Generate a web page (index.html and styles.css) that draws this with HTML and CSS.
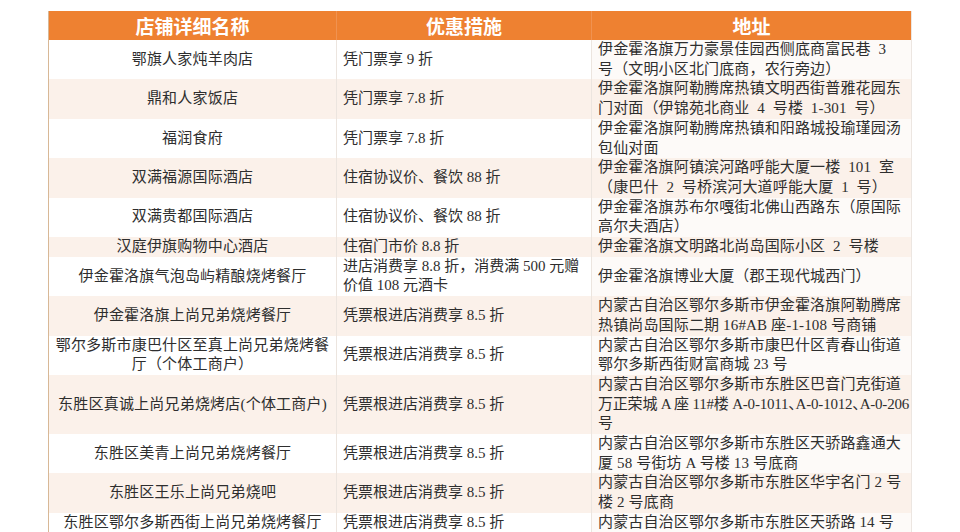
FILE: index.html
```html
<!DOCTYPE html>
<html lang="zh-CN">
<head>
<meta charset="utf-8">
<title>店铺优惠</title>
<link rel="stylesheet" href="styles.css">
</head>
<body>
<table class="shops">
  <colgroup>
    <col class="c-name">
    <col class="c-deal">
    <col class="c-addr">
  </colgroup>
  <thead>
    <tr><th>店铺详细名称</th><th>优惠措施</th><th>地址</th></tr>
  </thead>
  <tbody>
    <tr><td class="name">鄂旗人家炖羊肉店</td><td class="deal">凭门票享 9 折</td><td class="addr">伊金霍洛旗万力豪景佳园西侧底商富民巷&nbsp; 3<br>号（文明小区北门底商，农行旁边）</td></tr>
    <tr><td class="name">鼎和人家饭店</td><td class="deal">凭门票享 7.8 折</td><td class="addr">伊金霍洛旗阿勒腾席热镇文明西街普雅花园东<br>门对面（伊锦苑北商业&nbsp; 4&nbsp; 号楼&nbsp; 1-301&nbsp; 号）</td></tr>
    <tr><td class="name">福润食府</td><td class="deal">凭门票享 7.8 折</td><td class="addr">伊金霍洛旗阿勒腾席热镇和阳路城投瑜瑾园汤<br>包仙对面</td></tr>
    <tr><td class="name">双满福源国际酒店</td><td class="deal">住宿协议价、餐饮 88 折</td><td class="addr">伊金霍洛旗阿镇滨河路呼能大厦一楼&nbsp; 101&nbsp; 室<br>（康巴什&nbsp; 2&nbsp; 号桥滨河大道呼能大厦&nbsp; 1&nbsp; 号）</td></tr>
    <tr><td class="name">双满贵都国际酒店</td><td class="deal">住宿协议价、餐饮 88 折</td><td class="addr">伊金霍洛旗苏布尔嘎街北佛山西路东（原国际<br>高尔夫酒店）</td></tr>
    <tr><td class="name">汉庭伊旗购物中心酒店</td><td class="deal">住宿门市价 8.8 折</td><td class="addr">伊金霍洛旗文明路北尚岛国际小区&nbsp; 2&nbsp; 号楼</td></tr>
    <tr><td class="name">伊金霍洛旗气泡岛屿精酿烧烤餐厅</td><td class="deal">进店消费享 8.8 折，消费满 500 元赠<br>价值 108 元酒卡</td><td class="addr">伊金霍洛旗博业大厦（郡王现代城西门）</td></tr>
    <tr><td class="name">伊金霍洛旗上尚兄弟烧烤餐厅</td><td class="deal">凭票根进店消费享 8.5 折</td><td class="addr">内蒙古自治区鄂尔多斯市伊金霍洛旗阿勒腾席<br>热镇尚岛国际二期 16#AB 座-1-108 号商铺</td></tr>
    <tr><td class="name">鄂尔多斯市康巴什区至真上尚兄弟烧烤餐<br>厅（个体工商户）</td><td class="deal">凭票根进店消费享 8.5 折</td><td class="addr">内蒙古自治区鄂尔多斯市康巴什区青春山街道<br>鄂尔多斯西街财富商城 23 号</td></tr>
    <tr><td class="name">东胜区真诚上尚兄弟烧烤店(个体工商户)</td><td class="deal">凭票根进店消费享 8.5 折</td><td class="addr">内蒙古自治区鄂尔多斯市东胜区巴音门克街道<br><span class="tight">万正荣城 A 座 11#楼 A-0-1011、A-0-1012、A-0-206</span><br>号</td></tr>
    <tr><td class="name">东胜区美青上尚兄弟烧烤餐厅</td><td class="deal">凭票根进店消费享 8.5 折</td><td class="addr">内蒙古自治区鄂尔多斯市东胜区天骄路鑫通大<br>厦 58 号街坊 A 号楼 13 号底商</td></tr>
    <tr><td class="name">东胜区王乐上尚兄弟烧吧</td><td class="deal">凭票根进店消费享 8.5 折</td><td class="addr">内蒙古自治区鄂尔多斯市东胜区华宇名门 2 号<br>楼 2 号底商</td></tr>
    <tr><td class="name">东胜区鄂尔多斯西街上尚兄弟烧烤餐厅</td><td class="deal">凭票根进店消费享 8.5 折</td><td class="addr">内蒙古自治区鄂尔多斯市东胜区天骄路 14 号</td></tr>
  </tbody>
</table>
</body>
</html>
```
FILE: styles.css
```css
html, body {
  margin: 0;
  padding: 0;
  background: #ffffff;
}

body {
  padding: 11px 0 0 48px;
  font-family: "Liberation Serif", "Noto Sans CJK SC", serif;
  color: #2e2e2e;
  overflow: hidden;
  height: 532px;
  box-sizing: border-box;
}

.shops {
  border-collapse: collapse;
  table-layout: fixed;
  width: 863px;
  border-left: 1px solid #d8b896;
  border-right: 1px solid #ece6e1;
}

.c-name { width: 288px; }
.c-deal { width: 255px; }
.c-addr { width: 320px; }

.shops th {
  background: #ee8131;
  color: #ffffff;
  font-family: "Noto Sans CJK SC", sans-serif;
  font-weight: 700;
  font-size: 19px;
  height: 29px;
  line-height: 29px;
  padding: 0;
  text-align: center;
  border-right: 1px solid #f09250;
}

.shops th:last-child { border-right: none; }

.shops td {
  font-size: 15px;
  line-height: 19.7px;
  padding: 0 6px;
  vertical-align: middle;
  border-right: 1px solid #ece5df;
  white-space: nowrap;
  overflow: hidden;
}

.shops td:last-child { border-right: none; }

.shops tbody tr:nth-child(even) td {
  background: #fbf1ea;
}

.shops tbody tr:nth-child(odd) td {
  background: #ffffff;
}

.shops tbody tr:nth-child(odd) td.addr {
  background: #fdfaf8;
}

.name {
  text-align: center;
  letter-spacing: 0.2px;
}

.deal {
  text-align: left;
}

.addr {
  text-align: left;
  letter-spacing: 0.15px;
}

.tight {
  letter-spacing: -0.2px;
  font-feature-settings: "halt" 1;
}
```
